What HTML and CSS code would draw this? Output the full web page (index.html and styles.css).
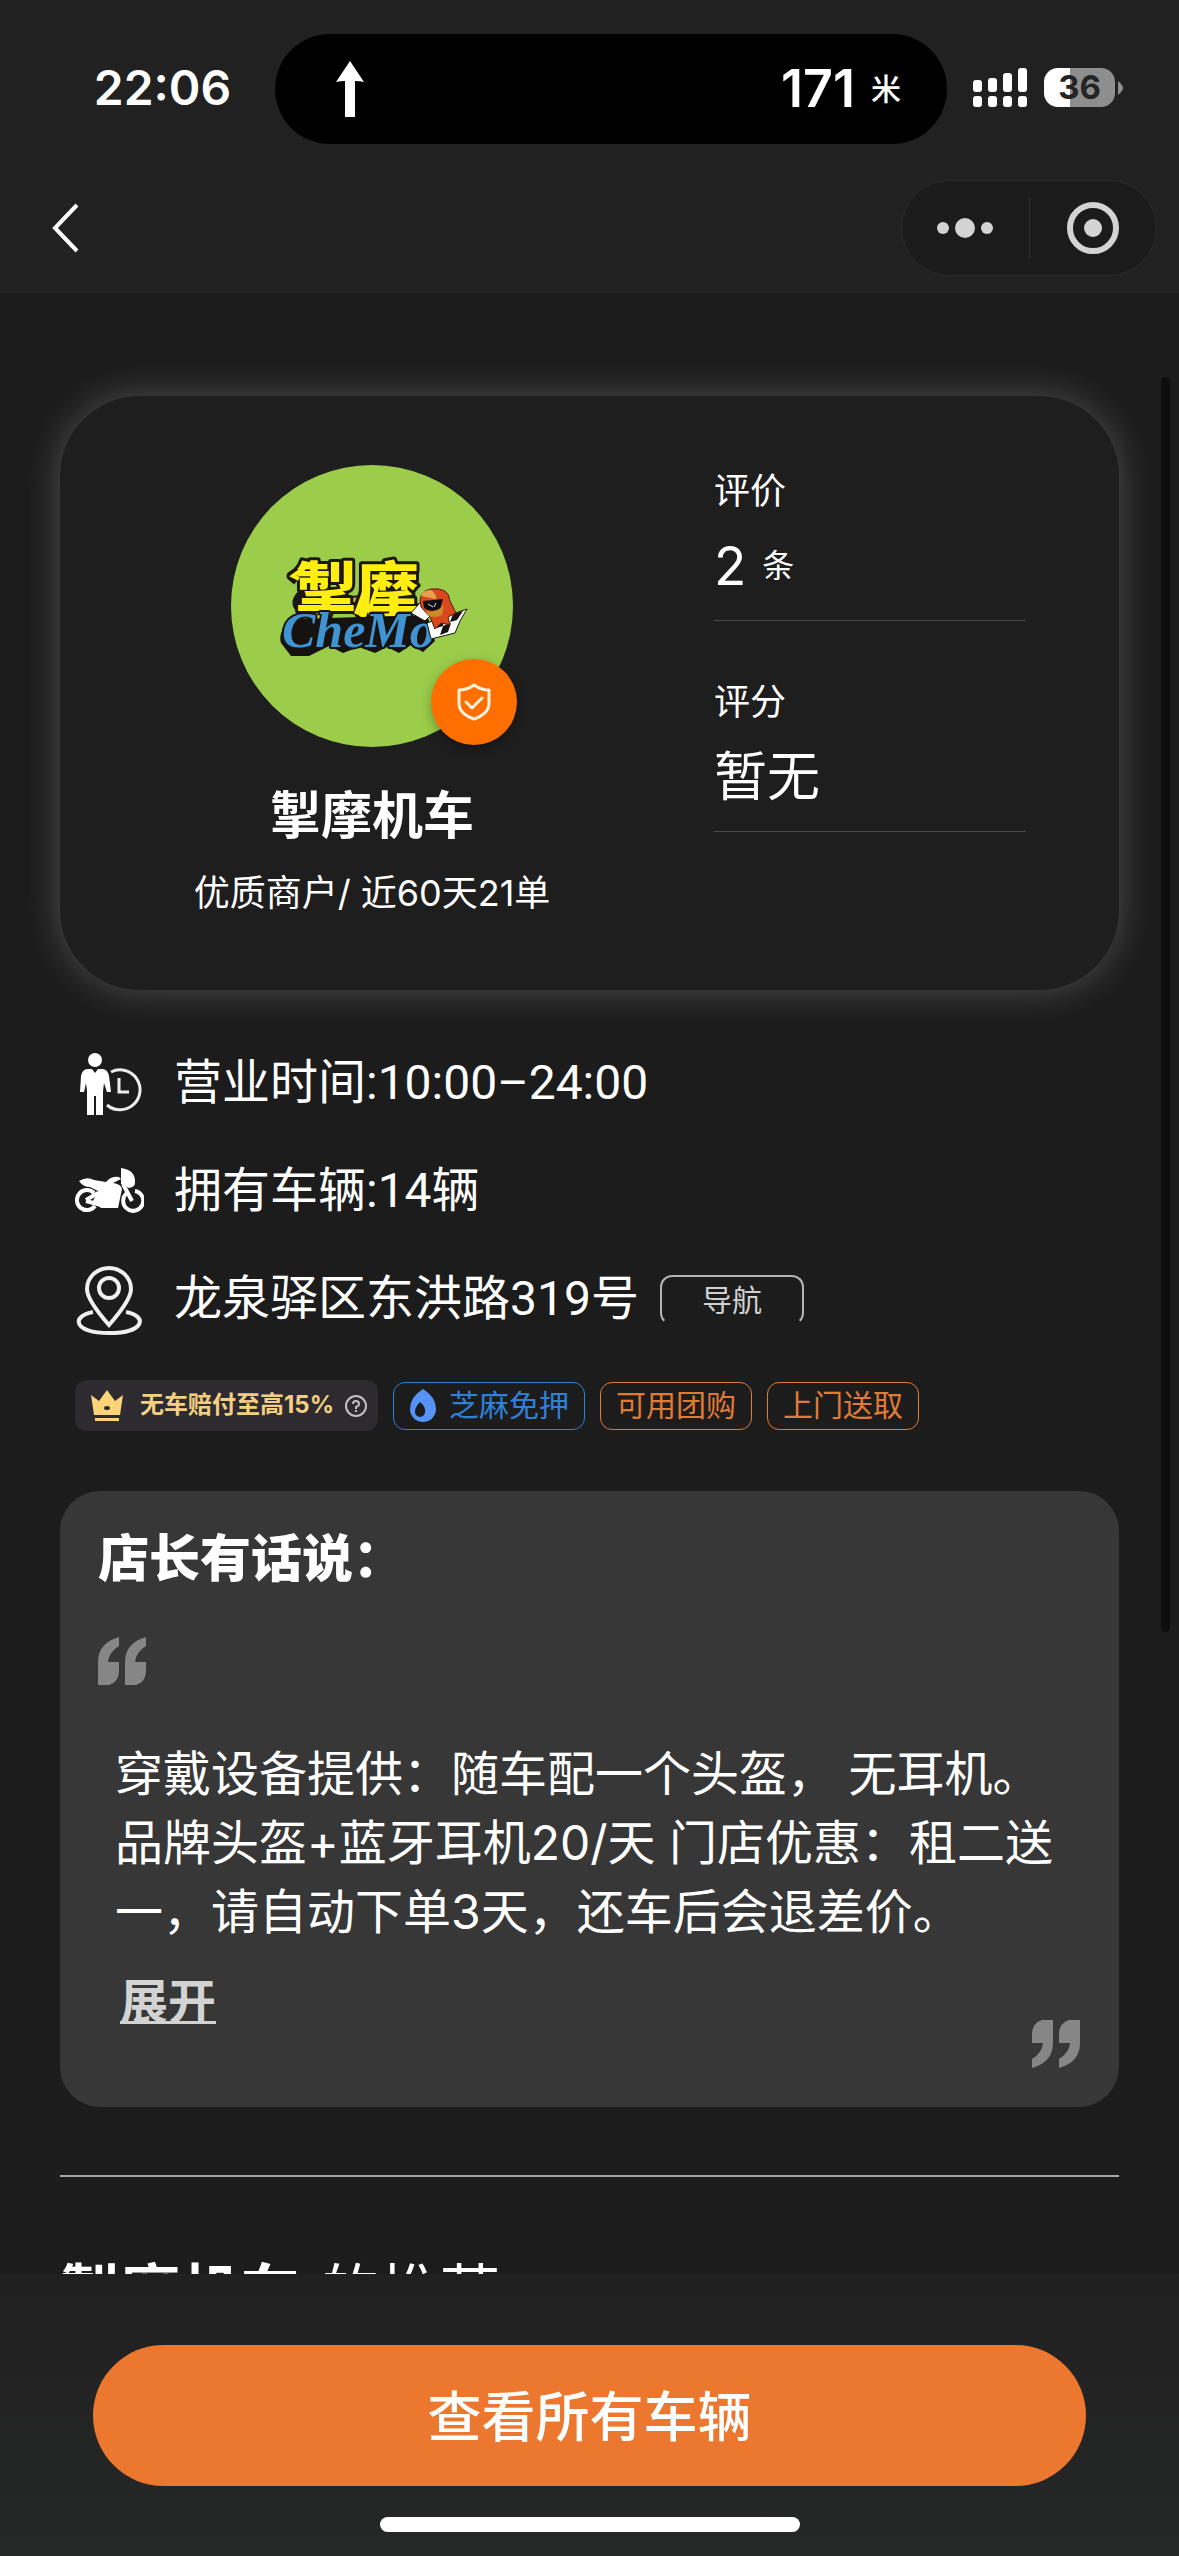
FILE: index.html
```html
<!DOCTYPE html>
<html lang="zh-CN">
<head>
<meta charset="utf-8">
<meta name="viewport" content="width=device-width, initial-scale=1">
<title>掣摩机车</title>
<link rel="stylesheet" href="styles.css">
</head>
<body>
<div class="app">
  <header class="top">
    <div class="status">
      <span class="status-time">22:06</span>
      <div class="island">
        <svg class="island-arrow" viewBox="0 0 30 56" aria-hidden="true"><path d="M15 0 L29 21 Q25 20 20 20 V56 H10 V20 Q5 20 1 21 Z" fill="#fff"/></svg>
        <span class="island-distance"><b>171</b><small>米</small></span>
      </div>
      <div class="indicators">
        <svg class="signal" viewBox="0 0 54 39" aria-hidden="true" fill="#fff">
          <rect x="0" y="12" width="9" height="12" rx="3"/><rect x="15" y="10" width="9" height="14" rx="3"/><rect x="30" y="5" width="9" height="19" rx="3"/><rect x="45" y="0" width="9" height="24" rx="3"/>
          <rect x="0" y="28" width="9" height="11" rx="3"/><rect x="15" y="28" width="9" height="11" rx="3"/><rect x="30" y="28" width="9" height="11" rx="3"/><rect x="45" y="28" width="9" height="11" rx="3"/>
        </svg>
        <span class="battery">36</span>
        <svg class="battery-nub" viewBox="0 0 5 14" aria-hidden="true"><path d="M0 0 Q5 4 5 7 Q5 10 0 14 Z" fill="#8e8e8e"/></svg>
      </div>
    </div>
    <nav class="nav">
      <button class="icon-button" aria-label="返回">
        <svg width="28" height="52" viewBox="0 0 28 52"><path d="M25 3 L3 26 L25 49" fill="none" stroke="#fff" stroke-width="4"/></svg>
      </button>
      <div class="capsule">
        <button class="icon-button capsule-more" aria-label="更多">
          <svg width="58" height="22" viewBox="0 0 58 22" fill="#d3d3d3"><circle cx="7" cy="11" r="6"/><circle cx="29" cy="11" r="10"/><circle cx="51" cy="11" r="6"/></svg>
        </button>
        <button class="icon-button capsule-close" aria-label="关闭">
          <svg width="54" height="54" viewBox="0 0 54 54"><circle cx="27" cy="27" r="23" fill="none" stroke="#d3d3d3" stroke-width="6"/><circle cx="27" cy="27" r="9" fill="#d3d3d3"/></svg>
        </button>
      </div>
    </nav>
  </header>

  <main class="content">
    <section class="profile">
      <div class="profile-shop">
        <div class="avatar">
          <svg class="avatar-logo" viewBox="0 0 282 282" aria-label="掣摩 CheMo">
            <circle cx="141" cy="141" r="141" fill="#9bcd4a"/>
            <path d="M118 132 L148 130 L146 152 L132 160 L126 144 Z" fill="#cfa45a" stroke="#1b1712" stroke-width="2"/>
            <path d="M76 148 Q58 140 72 128 M66 116 L60 111 L80 97 M124 150 L132 128 L138 146 L148 118" fill="none" stroke="#1b1712" stroke-width="9" stroke-linejoin="round"/>
            <text class="logo-hanzi" x="64" y="149">掣摩</text>
            <path d="M68 114 L62 111 L80 98 M125 149 L132 130 L138 146 L147 120" fill="none" stroke="#ffee10" stroke-width="4"/>
            <path d="M50 178 Q46 164 64 154 L196 150 L204 176 L192 187 L180 180 L168 188 L156 182 L144 188 L128 182 L112 188 L98 181 L78 191 L60 191 Z" fill="#15120f"/>
            <text class="logo-latin" x="51" y="182">CheMo</text>
            <path d="M196 158 L236 144 Q228 156 224 168 L200 174 Z" fill="#fff" stroke="#1b1712" stroke-width="1"/>
            <path d="M204 155 L213 152 L212 161 L203 164 Z M222 149 L232 146 L226 155 L219 157 Z M212 161 L220 158 L217 167 L209 170 Z" fill="#15120f"/>
            <path d="M180 148 L194 132 L202 148 L194 156 Z M214 134 L220 146 L212 150 Z" fill="#fff" stroke="#1b1712" stroke-width="1"/>
            <path d="M190 142 Q186 126 200 124 Q218 122 219 136 L225 148 L217 152 L219 160 L210 158 L204 164 L199 152 Z" fill="#d9481c" stroke="#5a1a0c" stroke-width="1"/>
            <path d="M190 131 Q191 125 200 125 Q206 129 205 134 Z" fill="#e8a04c"/>
            <path d="M192 136 L212 134 L209 144 Q199 148 193 143 Z" fill="#0d0d10"/>
            <path d="M195 146 Q204 149 213 140 L211 150 Q203 154 196 150 Z" fill="#c98a2a"/>
            <path d="M197 139 L202 142 M205 138 L203 142" stroke="#dfe6ea" stroke-width="1"/>
          </svg>
          <span class="avatar-badge">
            <svg width="34" height="38" viewBox="0 0 34 38" fill="none" stroke="#fff1dc" stroke-width="3" stroke-linejoin="round" stroke-linecap="round"><path d="M17 2 Q24 7 32 7 V20 Q32 31 17 36 Q2 31 2 20 V7 Q10 7 17 2 Z"/><path d="M9 19 L15 25 L25 15"/></svg>
          </span>
        </div>
        <h1 class="shop-name">掣摩机车</h1>
        <p class="shop-sub">优质商户/ 近60天21单</p>
      </div>
      <dl class="stats">
        <div class="stat"><dt>评价</dt><dd>2<small>条</small></dd></div>
        <div class="stat"><dt>评分</dt><dd>暂无</dd></div>
      </dl>
    </section>

    <ul class="info">
      <li>
        <svg viewBox="0 0 69 69" aria-hidden="true"><circle cx="20" cy="10" r="7" fill="#fff"/><path d="M12 19 H17 L20 23 L23 19 H28 Q33 20 34 26 L36 42 H32 L29 33 L28 41 V65 H21 V46 H19 V65 H12 V41 L11 33 L9 42 H5 L6 26 Q7 20 12 19 Z" fill="#fff"/><path d="M36 22 A20 20 0 1 1 32 55" fill="none" stroke="#ededed" stroke-width="3"/><path d="M44 28 V42 H54" fill="none" stroke="#ededed" stroke-width="3"/></svg>
        <span>营业时间:10:00–24:00</span>
      </li>
      <li>
        <svg viewBox="0 0 69 69" aria-hidden="true"><g fill="none" stroke="#fff" stroke-width="4"><path d="M19 35 A10 10 0 1 0 20 48"/><path d="M52 35 A10 10 0 1 0 60 33"/><path d="M11 42 L23 35 M11 43 L26 47 M48 26 L57 43"/></g><path d="M4 23 Q12 18 19 22 L31 24 Q36 18 44 19 L46 21 L38 25 Q46 26 47 31 L43 50 H26 L18 43 L23 33 L15 29 Q8 29 4 23 Z M46 10 Q61 12 60 25 Q60 29 54 30 L46 26 Z" fill="#fff"/></svg>
        <span>拥有车辆:14辆</span>
      </li>
      <li>
        <svg viewBox="0 0 69 69" aria-hidden="true" fill="none" stroke="#f0f0f0" stroke-width="4"><path d="M34 59 Q12 34 12 23 A22 21 0 0 1 56 23 Q56 34 34 59 Z"/><circle cx="34" cy="22" r="10"/><path d="M18 46 C-4 50 -2 67 34 67 S73 50 51 46"/></svg>
        <span>龙泉驿区东洪路319号</span>
        <button class="nav-button">导航</button>
      </li>
    </ul>

    <div class="tags">
      <button class="tag tag-gold">
        <svg width="34" height="32" viewBox="0 0 34 32" aria-hidden="true"><path d="M4 25 L1 5 L9 11 L17 0 L25 11 L33 5 L30 25 Z M5 28 H29 V31 H5 Z" fill="#fbd478"/><ellipse cx="17" cy="18" rx="3" ry="2" fill="#2d2a30"/></svg>
        <span>无车赔付至高15%</span>
        <svg width="24" height="24" viewBox="0 0 24 24" fill="none" stroke="#c3c0c4" stroke-width="2" aria-hidden="true"><circle cx="12" cy="12" r="10"/><path d="M9 10 Q9 7 12 7 Q15 7 15 10 Q15 12 12 13 V15 M12 16 V18"/></svg>
      </button>
      <span class="tag tag-blue">
        <svg width="28" height="34" viewBox="0 0 28 34" aria-hidden="true"><path d="M14 0 Q27 8 27 20 A13 13 0 0 1 1 20 Q1 8 14 0 Z" fill="#5593f7"/><path d="M11 13 Q17 18 16 23 A5 5 0 0 1 6 23 Q6 18 11 13 Z" fill="#1c1c1c"/></svg>
        <span>芝麻免押</span>
      </span>
      <span class="tag tag-orange"><span>可用团购</span></span>
      <span class="tag tag-orange"><span>上门送取</span></span>
    </div>

    <section class="message">
      <h2 class="message-title">店长有话说：</h2>
      <svg class="quote" viewBox="0 0 48 48" aria-hidden="true"><path id="mark" d="M21 0 V9 Q11 15 10 25 H21 V34 Q21 45 11 48 H0 V25 Q0 6 21 0 Z M48 0 V9 Q38 15 37 25 H48 V34 Q48 45 38 48 H27 V25 Q27 6 48 0 Z" fill="#868686"/></svg>
      <p class="message-text">穿戴设备提供：随车配一个头盔， 无耳机。<br>品牌头盔+蓝牙耳机20/天 门店优惠：租二送一，请自动下单3天，还车后会退差价。</p>
      <div class="message-foot">
        <button class="expand">展开</button>
        <svg class="quote" viewBox="0 0 48 48" aria-hidden="true"><use href="#mark" transform="rotate(180 24 24)"/></svg>
      </div>
    </section>

    <hr class="rule">
    <h2 class="recommend"><b>掣摩机车</b><span>的推荐</span></h2>
    <span class="scroll-thumb"></span>
  </main>

  <footer class="bottom">
    <button class="primary">查看所有车辆</button>
    <span class="home-bar"></span>
  </footer>
</div>
</body>
</html>
```

FILE: styles.css
```css
* { box-sizing: border-box; }

body {
  margin: 0;
  background: #1c1c1c;
  color: #fff;
  font-family: Inter, "Noto Sans CJK SC", sans-serif;
}

h1, h2, p, ul, dl, dd { margin: 0; padding: 0; }
svg { display: block; flex: none; }

button {
  margin: 0;
  padding: 0;
  border: 0;
  background: none;
  color: inherit;
  font: inherit;
}

.app { display: flex; flex-direction: column; height: 100vh; }

/* status bar and navigation */
.top { background: #212121; }
.status {
  display: grid;
  grid-template-columns: 275fr 672fr 232fr;
  align-items: center;
  padding-top: 34px;
}
.status-time {
  padding: 0 0 3px 50px;
  text-align: center;
  font-size: 48px;
  font-weight: 600;
}
.island {
  display: flex;
  align-items: center;
  justify-content: space-between;
  height: 110px;
  padding: 0 46px 0 60px;
  border-radius: 55px;
  background: #000;
}
.island-arrow { width: 30px; height: 56px; }
.island-distance { display: flex; align-items: center; gap: 16px; }
.island-distance b { font-size: 52px; font-weight: 600; line-height: 60px; }
.island-distance small { font-size: 30px; font-weight: 500; line-height: 44px; }
.indicators { display: flex; align-items: center; padding: 0 0 3px 26px; }
.signal { width: 54px; height: 39px; }
.battery {
  width: 71px;
  height: 39px;
  margin: 0 3px 0 17px;
  border-radius: 14px;
  background: linear-gradient(90deg, #fff 37%, #8e8e8e 37%);
  color: #242424;
  font-size: 33px;
  font-weight: 700;
  line-height: 39px;
  text-align: center;
}
.battery-nub { width: 5px; height: 14px; }
.nav {
  display: flex;
  align-items: center;
  justify-content: space-between;
  padding: 36px 22px 17px 52px;
}
.icon-button { display: flex; align-items: center; justify-content: center; }
.capsule {
  display: flex;
  align-items: center;
  width: 256px;
  height: 96px;
  border: 1px solid #2c2c2c;
  border-radius: 48px;
  background: #1b1b1b;
}
.capsule-more, .capsule-close { flex: 1; height: 60px; }
.capsule-more { border-right: 1px solid #333; }

/* shop card */
.content {
  position: relative;
  flex: 1;
  min-height: 0;
  overflow: hidden;
  padding: 103px 60px 0;
}
.scroll-thumb {
  position: absolute;
  top: 84px;
  right: 9px;
  width: 9px;
  height: 1255px;
  border-radius: 5px;
  background: #0d0d0d;
}
.profile {
  display: grid;
  grid-template-columns: 624fr 435fr;
  border-radius: 80px;
  background: #1e1e1e;
  box-shadow: 0 0 36px rgba(255, 255, 255, 0.22);
}
.profile-shop {
  display: flex;
  flex-direction: column;
  align-items: center;
  padding: 69px 0 75px;
}
.avatar { position: relative; width: 282px; height: 282px; }
.avatar-logo { width: 282px; height: 282px; }
.logo-hanzi {
  font-family: "Noto Sans CJK SC", sans-serif;
  font-size: 62px;
  font-weight: 900;
  fill: #ffee10;
  stroke: #1b1712;
  stroke-width: 6px;
  stroke-linejoin: round;
  paint-order: stroke;
}
.logo-latin {
  font-family: "Liberation Serif", serif;
  font-size: 50px;
  font-style: italic;
  font-weight: 700;
  fill: #3f93d2;
  stroke: #15120f;
  stroke-width: 4px;
  stroke-linejoin: round;
  paint-order: stroke;
}
.avatar-badge {
  position: absolute;
  right: -4px;
  bottom: 2px;
  display: flex;
  align-items: center;
  justify-content: center;
  width: 86px;
  height: 86px;
  border-radius: 50%;
  background: #ff6f00;
  box-shadow: 0 4px 12px rgba(0, 0, 0, 0.3);
}
.shop-name { margin-top: 39px; font-size: 51px; font-weight: 700; line-height: 60px; }
.shop-sub { margin-top: 25px; font-size: 36px; line-height: 44px; }
.stats {
  display: flex;
  flex-direction: column;
  gap: 59px;
  margin: 0;
  padding: 73px 93px 0 30px;
}
.stat { padding-bottom: 22px; border-bottom: 1px solid #4a4a4a; }
.stat dt { font-size: 36px; line-height: 44px; }
.stat dd {
  display: flex;
  align-items: center;
  gap: 16px;
  margin-top: 21px;
  font-size: 53px;
  line-height: 64px;
}
.stat small { font-size: 32px; line-height: 44px; }

/* opening hours, fleet, address */
.info { margin-top: 40px; padding-left: 15px; list-style: none; }
.info li {
  display: flex;
  align-items: center;
  height: 108px;
  font-size: 48px;
}
.info span {
  padding-bottom: 2px;
  font-family: Roboto, "Noto Sans CJK SC", sans-serif;
  line-height: 60px;
}
.info svg { width: 69px; height: 69px; margin-right: 30px; }
.nav-button {
  width: 144px;
  height: 50px;
  margin-left: 21px;
  border: 2px solid #b4b4b4;
  border-bottom-color: transparent;
  border-radius: 12px;
  color: #d0d0d0;
  font-size: 30px;
  line-height: 44px;
}

.tags {
  display: flex;
  align-items: center;
  gap: 15px;
  margin-top: 26px;
  padding-left: 15px;
}
.tag {
  display: flex;
  align-items: center;
  height: 48px;
  padding: 0 15px;
  border: 1px solid;
  border-radius: 12px;
  font-size: 30px;
}
.tag span { padding-bottom: 2px; line-height: 44px; }
.tag-gold {
  gap: 10px;
  height: 51px;
  padding: 0 10px 0 15px;
  border: 0;
  background: #2d2a30;
  color: #f3cf82;
  font-size: 24px;
  font-weight: 700;
}
.tag-gold span { margin-left: 6px; }
.tag-blue { gap: 12px; color: #2f81d8; }
.tag-orange { color: #e07b36; }

/* message from the owner */
.message {
  margin-top: 60px;
  padding: 38px 39px 39px 38px;
  border-radius: 40px;
  background: #373737;
}
.message-title { font-size: 51px; font-weight: 900; line-height: 60px; }
.quote { width: 48px; height: 48px; margin-top: 48px; }
.message-text { margin-top: 54px; padding: 0 17px; font-size: 48px; line-height: 69px; }
.message-foot {
  display: flex;
  align-items: flex-start;
  justify-content: space-between;
  margin-top: 26px;
  padding-left: 22px;
}
.expand {
  color: #d3d3d3;
  font-size: 48px;
  font-weight: 700;
  line-height: 60px;
  text-decoration: underline;
  text-decoration-thickness: 3px;
}

.rule { height: 2px; margin: 68px 0 0; border: 0; background: #a6a6a6; }
.recommend {
  display: flex;
  gap: 20px;
  margin-top: 75px;
  font-size: 60px;
  font-weight: 400;
  line-height: 80px;
  white-space: nowrap;
}

/* bottom action bar */
.bottom {
  display: flex;
  flex-direction: column;
  align-items: center;
  gap: 31px;
  padding: 71px 93px 24px;
  background: linear-gradient(180deg, #202021, #262727);
}
.primary {
  width: 100%;
  height: 141px;
  padding-bottom: 4px;
  border-radius: 71px;
  background: #ec772f;
  font-size: 54px;
  font-weight: 500;
}
.home-bar { width: 420px; height: 15px; border-radius: 8px; background: #fff; }
```
